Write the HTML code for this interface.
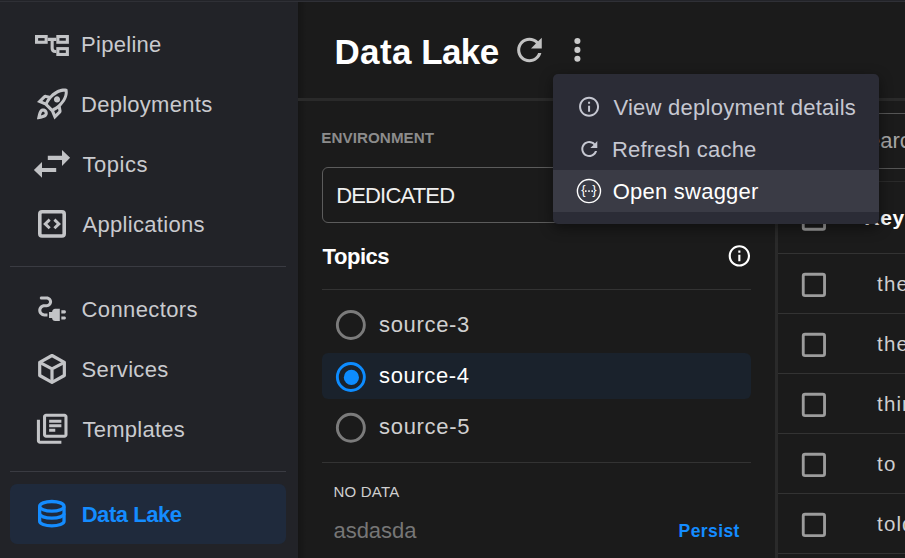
<!DOCTYPE html>
<html lang="en">
<head>
<meta charset="utf-8">
<title>Data Lake</title>
<style>
*{box-sizing:border-box;margin:0;padding:0}
html,body{width:905px;height:558px;overflow:hidden;background:#1b1b1b}
body{position:relative;font-family:"Liberation Sans",sans-serif;color:#c9cace;-webkit-font-smoothing:antialiased}
.abs{position:absolute}
.t{position:absolute;white-space:nowrap;line-height:1;transform-origin:0 0}
#topbar{left:0;top:0;width:905px;height:2px;background:#232429;border-bottom:1px solid #2f3036}
#sidebar{left:0;top:2px;width:298px;height:556px;background:#222328}
.nav{font-size:21.3px;color:#c9cace;left:82.5px}
.sdiv{left:10px;width:276px;height:1px;background:#3a3b42}
#active{left:10px;top:484px;width:276px;height:60px;border-radius:7px;background:#1f2a3c}
#main{left:298px;top:2px;width:607px;height:556px;background:#1b1b1b}
#hline{left:298px;top:98px;width:607px;height:3px;background:#2a2a2a}
svg{position:absolute;overflow:visible}
#vline{left:775px;top:101px;width:3px;height:457px;background:#2a2a2a}
.hl{position:absolute;height:1px;background:#333}
.cell{font-size:20.5px;color:#cfcfcf;left:877.1px;letter-spacing:1.1px}
#menu{left:553px;top:74px;width:326px;height:150px;border-radius:5px;background:#2b2c36;box-shadow:0 4px 14px rgba(0,0,0,.45)}
#mhover{left:553px;top:170px;width:326px;height:42px;background:#3a3b45}
.mi{font-size:21.3px;color:#c5c7d1;left:613.5px}
.src{font-size:21.3px;color:#d0d0d0;left:379.5px}
</style>
</head>
<body>
<div class="abs" id="topbar"></div>
<div class="abs" id="sidebar"></div>
<div class="abs" id="main"></div>
<div class="abs" id="sideshadow" style="left:298px;top:2px;width:9px;height:556px;background:linear-gradient(to right,rgba(0,0,0,.2),rgba(0,0,0,0))"></div>

<!-- sidebar nav -->
<div class="t nav" id="n1" style="left:80.97px;top:33.58px;font-size:22px;letter-spacing:0.298px">Pipeline</div>
<div class="t nav" id="n2" style="left:80.97px;top:93.58px;font-size:22px;letter-spacing:0.277px">Deployments</div>
<div class="t nav" id="n3" style="left:82.38px;top:153.58px;font-size:22px;letter-spacing:0.536px">Topics</div>
<div class="t nav" id="n4" style="left:82.56px;top:213.58px;font-size:22px;letter-spacing:0.297px">Applications</div>
<div class="abs sdiv" style="top:266px"></div>
<div class="t nav" id="n5" style="left:81.56px;top:298.58px;font-size:22px;letter-spacing:0.390px">Connectors</div>
<div class="t nav" id="n6" style="left:81.58px;top:358.7px;font-size:22px;letter-spacing:0.331px">Services</div>
<div class="t nav" id="n7" style="left:82.56px;top:418.68px;font-size:22px;letter-spacing:0.241px">Templates</div>
<div class="abs sdiv" style="top:471px"></div>
<div class="abs" id="active"></div>
<div class="t nav" id="n8" style="left:81.65px;top:503.68px;font-size:22px;color:#148cff;font-weight:bold;letter-spacing:-0.435px">Data Lake</div>

<!-- header -->
<div class="t" id="title" style="left:334.4px;top:34.37px;font-size:35px;font-weight:bold;color:#fff"><span style="letter-spacing:0.42px">Data </span><span style="letter-spacing:-0.6px;margin-left:-0.9px">Lake</span></div>
<div class="abs" id="hline"></div>

<!-- left panel -->
<div class="t" id="envlabel" style="left:321.34px;top:130.03px;font-size:15.2px;font-weight:bold;color:#8c8c8c;letter-spacing:0.051px">ENVIRONMENT</div>
<div class="abs" id="select" style="left:322px;top:167px;width:440px;height:56px;border:1px solid #5c5c5c;border-radius:6px"></div>
<div class="t" id="dedicated" style="left:336.16px;top:184.9px;font-size:22px;color:#f0f0f0;letter-spacing:-0.828px">DEDICATED</div>
<div class="t" id="topicsh" style="left:322.56px;top:245.58px;font-size:22px;font-weight:bold;color:#fff;letter-spacing:-0.444px">Topics</div>
<div class="hl" style="left:322px;top:289px;width:429px"></div>
<div class="abs" id="selrow" style="left:322px;top:353px;width:429px;height:46px;border-radius:6px;background:#1a222c"></div>
<div class="t src" id="s3" style="left:379.06px;top:313.58px;font-size:22px;letter-spacing:0.667px">source-3</div>
<div class="t src" id="s4" style="left:379.06px;top:364.7px;font-size:22px;color:#fff;letter-spacing:0.627px">source-4</div>
<div class="t src" id="s5" style="left:379.06px;top:415.78px;font-size:22px;letter-spacing:0.677px">source-5</div>
<div class="hl" style="left:322px;top:462px;width:429px"></div>
<div class="t" id="nodata" style="left:333.52px;top:484.30px;font-size:15px;color:#cfcfcf;letter-spacing:0.210px">NO DATA</div>
<div class="t" id="asd" style="left:333.48px;top:519.78px;font-size:22px;color:#767676;letter-spacing:-0.025px">asdasda</div>
<div class="t" id="persist" style="left:678.59px;top:522.99px;font-size:17.5px;font-weight:bold;color:#148cff;letter-spacing:0.414px">Persist</div>

<!-- right panel -->
<div class="abs" id="vline"></div>
<div class="abs" id="search" style="left:800px;top:113px;width:140px;height:56px;border:1px solid #555;border-radius:6px"></div>
<div class="t" id="searchph" style="left:853.3px;top:130.28px;font-size:22px;color:#a6a6a6">Search</div>
<div class="hl" style="left:778px;top:180.5px;width:127px;background:#2a2a2a"></div>

<div class="t" id="key" style="left:864.3px;top:207.2px;letter-spacing:0.7px;font-size:21px;font-weight:bold;color:#fff">Key</div>
<div class="hl" style="left:778px;top:253px;width:127px"></div>
<div class="t cell" style="top:274.4px">the</div>
<div class="hl" style="left:778px;top:313px;width:127px"></div>
<div class="t cell" style="top:334.4px">the</div>
<div class="hl" style="left:778px;top:373px;width:127px"></div>
<div class="t cell" style="top:394.4px">thin</div>
<div class="hl" style="left:778px;top:433px;width:127px"></div>
<div class="t cell" style="top:454.4px">to</div>
<div class="hl" style="left:778px;top:493px;width:127px"></div>
<div class="t cell" style="top:514.4px">told</div>
<div class="hl" style="left:778px;top:553px;width:127px"></div>

<svg id="controls" width="905" height="558" viewBox="0 0 905 558" style="left:0;top:0">
<g fill="none" stroke="#7b7b7b" stroke-width="2.9">
<circle cx="350.85" cy="325" r="13.5"/>
<circle cx="350.85" cy="427.700" r="13.5"/>
</g>
<circle cx="350.85" cy="377" r="13.5" fill="none" stroke="#0d8cff" stroke-width="2.9"/>
<circle cx="351.4" cy="377.400" r="7.6" fill="#0d8cff"/>
<g fill="none" stroke="#9c9c9c" stroke-width="2.85">
<rect x="803.25" y="207.950" width="21.3" height="21.3" rx="1.8"/>
<rect x="803.25" y="274.250" width="21.3" height="21.3" rx="1.8"/>
<rect x="803.25" y="334.250" width="21.3" height="21.3" rx="1.8"/>
<rect x="803.25" y="394.250" width="21.3" height="21.3" rx="1.8"/>
<rect x="803.25" y="454.250" width="21.3" height="21.3" rx="1.8"/>
<rect x="803.25" y="514.250" width="21.3" height="21.3" rx="1.8"/>
</g>
</svg>
<!-- dropdown menu -->
<div class="abs" id="menu"></div>
<div class="abs" id="mhover"></div>
<div class="t mi" id="m1" style="left:613.38px;top:96.78px;font-size:22px;letter-spacing:0.256px">View deployment details</div>
<div class="t mi" id="m2" style="left:611.97px;top:138.58px;font-size:22px;letter-spacing:0.207px">Refresh cache</div>
<div class="t mi" id="m3" style="left:612.78px;top:180.58px;font-size:22px;color:#fff;letter-spacing:0.229px">Open swagger</div>

<!-- icons (page pixel coordinates) -->
<svg id="icons" width="905" height="558" viewBox="0 0 905 558" style="left:0;top:0">
<g id="ic-pipeline" fill="none" stroke="#c3c4c7" stroke-width="3.1">
<rect x="36.55" y="36.55" width="9.6" height="5.7"/>
<rect x="57.85" y="36.55" width="9.5" height="5.7"/>
<rect x="57.85" y="48.65" width="9.5" height="5.8"/>
<path d="M47.7 39.4H56.3M52.15 39.4V48.3Q52.15 51.5 55.3 51.5H56.3"/>
</g>
<g id="ic-rocket" fill="#c3c4c7" transform="translate(33.92 85.52) scale(1.54)">
<path d="M6,15c-0.830,0-1.580,0.340-2.120,0.880C2.700,17.060,2,22,2,22s4.940-0.700,6.120-1.880C8.660,19.580,9,18.830,9,18C9,16.340,7.660,15,6,15z M6.710,18.710c-0.280,0.280-2.170,0.760-2.170,0.760s0.470-1.880,0.760-2.170C5.470,17.110,5.720,17,6,17c0.550,0,1,0.450,1,1 C7,18.280,6.890,18.530,6.710,18.710z M17.420,13.650L17.420,13.650c6.360-6.360,4.240-11.310,4.240-11.310s-4.950-2.120-11.310,4.240l-2.490-0.500 C7.210,5.950,6.530,6.160,6.050,6.630L2,10.690l5,2.140L11.170,17l2.140,5l4.050-4.050c0.470-0.470,0.680-1.150,0.550-1.810L17.420,13.650z M7.410,10.830L5.500,10.010l1.970-1.970l1.440,0.290C8.340,9.160,7.830,10.030,7.410,10.830z M13.990,18.500l-0.820-1.910 c0.800-0.420,1.670-0.930,2.490-1.500l0.290,1.440L13.990,18.500z M16,12.240c-1.320,1.320-3.380,2.400-4.040,2.730l-2.930-2.930 c0.320-0.650,1.400-2.710,2.730-4.040c4.680-4.680,8.230-3.990,8.230-3.990S20.680,7.560,16,12.240z M15,11c1.100,0,2-0.900,2-2s-0.900-2-2-2s-2,0.900-2,2 S13.900,11,15,11z"/>
</g>
<g id="ic-topics" fill="#c1c2c5">
<path d="M47.8 155.8H62V150.1L70.1 157.85L62 165.9V159.9H47.8Z"/>
<path d="M56.2 167.9H42V162.1L33.9 169.95L42 177.8V172H56.2Z"/>
</g>
<g id="ic-apps" fill="none" stroke="#c3c4c7">
<rect x="39.8" y="211.7" width="24.4" height="24.3" rx="2.2" stroke-width="3.6"/>
<path d="M49.7 219.6L45.2 223.9L49.7 228.3M54.4 219.6L58.9 223.9L54.4 228.3" stroke-width="2.9"/>
</g>
<g id="ic-conn" fill="#c3c4c7" transform="translate(33.62 290.32) scale(1.54)">
<path d="M21 14c0-.55-.45-1-1-1h-2v2h2c.55 0 1-.45 1-1zm-1 3h-2v2h2c.55 0 1-.45 1-1s-.45-1-1-1zm-8-3h-2v4h2c0 1.100.9 2 2 2h3v-8h-3c-1.100 0-2 .9-2 2z"/>
<path d="M5 13c0-1.100.9-2 2-2h1.500c1.930 0 3.500-1.570 3.500-3.500S10.430 4 8.500 4H5c-.55 0-1 .45-1 1s.45 1 1 1h3.500c.83 0 1.500.67 1.500 1.500S9.330 9 8.500 9H7c-2.210 0-4 1.790-4 4s1.790 4 4 4h2v-2H7c-1.100 0-2-.9-2-2z"/>
</g>
<g id="ic-services" fill="none" stroke="#c3c4c7" stroke-width="3.2" stroke-linejoin="round">
<path d="M52 355.5L64.35 362.4V375.5L52 382.4L39.7 375.5V362.4Z"/>
<path d="M39.7 362.4L52 368.8L64.35 362.4M52 368.8V382.4"/>
</g>
<g id="ic-templates" fill="#c3c4c7" transform="translate(33.84 410.8) scale(1.53 1.5)">
<path d="M4 6H2v14c0 1.100.9 2 2 2h14v-2H4V6zm16-4H8c-1.100 0-2 .9-2 2v12c0 1.100.9 2 2 2h12c1.100 0 2-.9 2-2V4c0-1.100-.9-2-2-2zm0 14H8V4h12v12zM10 9h8v2h-8zm0 3h4v2h-4zm0-6h8v2h-8z"/>
</g>
<g id="ic-db" fill="none" stroke="#148cff" stroke-width="3.3">
<ellipse cx="51.85" cy="506.3" rx="12.2" ry="4.8"/>
<path d="M39.65 506.5V521.2A12.200 4.600 0 0 0 64.050 521.200V506.500"/>
<path d="M39.65 513.600A12.200 4.600 0 0 0 64.050 513.600"/>
</g>
<g id="ic-refresh" fill="#c2c2c2" transform="translate(510.97 31.52) scale(1.54)">
<path d="M17.650 6.350C16.200 4.900 14.210 4 12 4c-4.420 0-7.990 3.580-7.990 8s3.570 8 7.990 8c3.730 0 6.840-2.550 7.730-6h-2.080c-.82 2.330-3.040 4-5.650 4-3.310 0-6-2.690-6-6s2.690-6 6-6c1.660 0 3.140.69 4.220 1.780L13 11h7V4l-2.350 2.350z"/>
</g>
<g id="ic-more" fill="#cacaca">
<circle cx="577.4" cy="41" r="3.05"/><circle cx="577.4" cy="49.900" r="3.05"/><circle cx="577.4" cy="58.75" r="3.05"/>
</g>
<g id="ic-info" fill="#fff" transform="translate(726.55 243.100) scale(1.0667)">
<path d="M11 7h2v2h-2zm0 4h2v6h-2zm1-9C6.480 2 2 6.480 2 12s4.480 10 10 10 10-4.480 10-10S17.520 2 12 2zm0 18c-4.410 0-8-3.590-8-8s3.590-8 8-8 8 3.590 8 8-3.590 8-8 8z"/>
</g>
<g id="ic-minfo" fill="#c5c7d1" transform="translate(577.07 94.65)">
<path d="M11 7h2v2h-2zm0 4h2v6h-2zm1-9C6.480 2 2 6.480 2 12s4.480 10 10 10 10-4.480 10-10S17.520 2 12 2zm0 18c-4.410 0-8-3.590-8-8s3.590-8 8-8 8 3.590 8 8-3.590 8-8 8z"/>
</g>
<g id="ic-mrefresh" fill="#c5c7d1" transform="translate(577.3 137.1)">
<path d="M17.650 6.350C16.200 4.900 14.210 4 12 4c-4.420 0-7.990 3.580-7.990 8s3.570 8 7.990 8c3.730 0 6.840-2.550 7.730-6h-2.080c-.82 2.330-3.040 4-5.650 4-3.310 0-6-2.690-6-6s2.690-6 6-6c1.660 0 3.140.69 4.220 1.780L13 11h7V4l-2.350 2.350z"/>
</g>
<g id="ic-swagger">
<circle cx="588.95" cy="191.050" r="11.55" fill="none" stroke="#fff" stroke-width="1.4"/>
<text x="581.200" y="194.400" font-family="Liberation Sans, sans-serif" font-size="13" fill="#fff">{</text>
<text x="592.300" y="194.400" font-family="Liberation Sans, sans-serif" font-size="13" fill="#fff">}</text>
<rect x="585" y="190.300" width="1.600" height="1.600" fill="#fff"/><rect x="588.200" y="190.300" width="1.600" height="1.600" fill="#fff"/><rect x="591.400" y="190.300" width="1.600" height="1.600" fill="#fff"/>
</g>
</svg>
</body>
</html>
